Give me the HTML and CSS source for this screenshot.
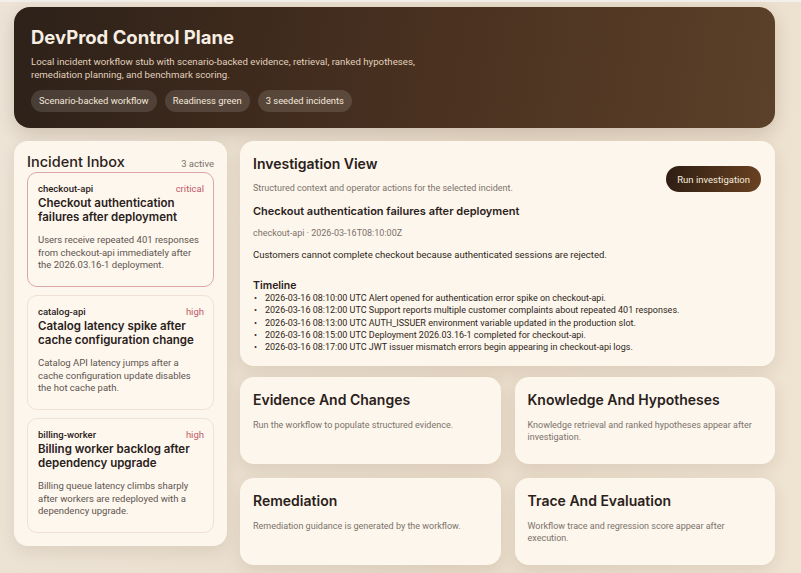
FILE: index.html
```html
<!DOCTYPE html>
<html lang="en">

<head>
    <meta charset="UTF-8">
    <meta name="viewport" content="width=device-width, initial-scale=1.0">
    <title>DevProd Control Plane</title>
    <link rel="stylesheet" href="styles.css">
</head>

<body>
    <div class="page">
        <header class="hero">
            <h1>DevProd Control Plane</h1>
            <p class="hero-sub">Local incident workflow stub with scenario-backed evidence, retrieval, ranked hypotheses,<br>remediation planning, and benchmark scoring.</p>
            <div class="pills">
                <span class="pill">Scenario-backed workflow</span>
                <span class="pill">Readiness green</span>
                <span class="pill">3 seeded incidents</span>
            </div>
        </header>

        <main class="layout">
            <aside class="inbox">
                <div class="inbox-head">
                    <h2>Incident Inbox</h2>
                    <span class="count">3 active</span>
                </div>
                <div class="incident selected">
                    <div class="incident-top">
                        <span class="service">checkout-api</span>
                        <span class="sev">critical</span>
                    </div>
                    <h3>Checkout authentication failures after deployment</h3>
                    <p>Users receive repeated 401 responses from checkout-api immediately after the 2026.03.16-1 deployment.</p>
                </div>
                <div class="incident">
                    <div class="incident-top">
                        <span class="service">catalog-api</span>
                        <span class="sev">high</span>
                    </div>
                    <h3>Catalog latency spike after cache configuration change</h3>
                    <p>Catalog API latency jumps after a cache configuration update disables the hot cache path.</p>
                </div>
                <div class="incident">
                    <div class="incident-top">
                        <span class="service">billing-worker</span>
                        <span class="sev">high</span>
                    </div>
                    <h3>Billing worker backlog after dependency upgrade</h3>
                    <p>Billing queue latency climbs sharply after workers are redeployed with a dependency upgrade.</p>
                </div>
            </aside>

            <section class="main-col">
                <div class="panel investigation">
                    <div class="inv-head">
                        <div>
                            <h2>Investigation View</h2>
                            <p class="muted">Structured context and operator actions for the selected incident.</p>
                        </div>
                        <button class="run-btn">Run investigation</button>
                    </div>
                    <h3 class="inv-title">Checkout authentication failures after deployment</h3>
                    <p class="muted meta">checkout-api · 2026-03-16T08:10:00Z</p>
                    <p class="summary">Customers cannot complete checkout because authenticated sessions are rejected.</p>
                    <h4 class="timeline-title">Timeline</h4>
                    <ul class="timeline">
                        <li>2026-03-16 08:10:00 UTC Alert opened for authentication error spike on checkout-api.</li>
                        <li>2026-03-16 08:12:00 UTC Support reports multiple customer complaints about repeated 401 responses.</li>
                        <li>2026-03-16 08:13:00 UTC AUTH_ISSUER environment variable updated in the production slot.</li>
                        <li>2026-03-16 08:15:00 UTC Deployment 2026.03.16-1 completed for checkout-api.</li>
                        <li>2026-03-16 08:17:00 UTC JWT issuer mismatch errors begin appearing in checkout-api logs.</li>
                    </ul>
                </div>

                <div class="grid">
                    <div class="panel small">
                        <h2>Evidence And Changes</h2>
                        <p class="muted">Run the workflow to populate structured evidence.</p>
                    </div>
                    <div class="panel small">
                        <h2>Knowledge And Hypotheses</h2>
                        <p class="muted">Knowledge retrieval and ranked hypotheses appear after investigation.</p>
                    </div>
                    <div class="panel small">
                        <h2>Remediation</h2>
                        <p class="muted">Remediation guidance is generated by the workflow.</p>
                    </div>
                    <div class="panel small">
                        <h2>Trace And Evaluation</h2>
                        <p class="muted">Workflow trace and regression score appear after execution.</p>
                    </div>
                </div>
            </section>
        </main>
    </div>
</body>

</html>
```

FILE: styles.css
```css
* {
    margin: 0;
    padding: 0;
    box-sizing: border-box;
}

body {
    font-family: Roboto, "Liberation Sans", sans-serif;
    color: #2a211b;
    background: linear-gradient(100deg, #ede4d7 0%, #e9dcca 60%, #efe3d2 100%);
    min-height: 573px;
    overflow: hidden;
}

.page {
    padding: 5px 26px 0 14px;
    border-top: 2px solid #f3f0ec;
}

h1,
h2,
h3,
h4 {
    font-family: Inter, "DejaVu Sans", sans-serif;
}

.hero {
    background: linear-gradient(100deg, #2d2119 0%, #4a3120 55%, #5b4129 100%);
    border-radius: 16px;
    padding: 19px 17px 16px;
    color: #f7eee2;
    box-shadow: 0 6px 18px rgba(70, 45, 20, 0.18);
}

.hero h1 {
    font-size: 18.5px;
    font-weight: 700;
    line-height: 22px;
}

.hero-sub {
    margin-top: 8px;
    font-size: 9.7px;
    line-height: 12.5px;
    color: #e0d0bc;
}

.pills {
    display: flex;
    gap: 8px;
    margin-top: 9px;
}

.pill {
    background: rgba(255, 255, 255, 0.13);
    border-radius: 11px;
    padding: 0 8px;
    height: 22px;
    line-height: 22px;
    font-size: 9.4px;
    color: #f3e8da;
}

.layout {
    display: flex;
    gap: 13px;
    margin-top: 13px;
    align-items: flex-start;
}

.inbox {
    width: 213px;
    flex-shrink: 0;
    background: #fdf6ec;
    border-radius: 14px;
    padding: 12px 13px 13px 13px;
    box-shadow: 0 6px 16px rgba(90, 60, 30, 0.1);
}

.inbox-head {
    display: flex;
    justify-content: space-between;
    align-items: baseline;
    margin-bottom: 1px;
}

.inbox-head h2 {
    font-size: 14.5px;
    font-weight: 500;
    line-height: 18px;
}

.count {
    font-size: 9.5px;
    color: #7b716a;
}

.incident {
    border: 1px solid #efe2d4;
    border-radius: 10px;
    padding: 10px 9px 12px 10px;
    background: #fdf7ee;
    height: 115px;
    margin-top: 8px;
}

.inbox-head + .incident {
    margin-top: 0;
}

.incident.selected {
    border: 1.5px solid #d9a8a6;
}

.incident-top {
    display: flex;
    justify-content: space-between;
    font-size: 9.5px;
    line-height: 12px;
}

.service {
    font-weight: 500;
    color: #2a211b;
}

.sev {
    color: #c25a68;
}

.incident h3 {
    font-size: 11.5px;
    font-weight: 600;
    line-height: 14px;
    margin-top: 1px;
}

.incident p {
    font-size: 9.5px;
    line-height: 12.5px;
    color: #5e554f;
    margin-top: 10px;
}

.main-col {
    flex: 1;
    display: flex;
    flex-direction: column;
    gap: 11px;
}

.panel {
    background: #fdf6ec;
    border-radius: 14px;
    box-shadow: 0 6px 16px rgba(90, 60, 30, 0.1);
}

.investigation {
    height: 225px;
    padding: 14px 13px 0;
}

.inv-head {
    display: flex;
    justify-content: space-between;
    align-items: flex-start;
}

.panel h2 {
    font-size: 14px;
    font-weight: 600;
    line-height: 18px;
}

.muted {
    font-size: 9px;
    color: #7b726b;
    line-height: 12px;
}

.inv-head .muted {
    margin-top: 9px;
}

.run-btn {
    margin-top: 11px;
    margin-right: 1px;
    background: linear-gradient(100deg, #2d1d12 0%, #6a4222 100%);
    color: #f7ecde;
    border: none;
    border-radius: 13px;
    height: 26px;
    padding: 0 11px;
    font-family: Roboto, "Liberation Sans", sans-serif;
    font-size: 9.5px;
}

.inv-title {
    font-size: 11px;
    font-weight: 600;
    margin-top: 10px;
    line-height: 14px;
}

.meta {
    margin-top: 9px;
}

.summary {
    font-size: 9.5px;
    line-height: 12px;
    margin-top: 10px;
    color: #2e2620;
}

.timeline-title {
    font-size: 10.5px;
    font-weight: 600;
    margin-top: 18px;
    line-height: 13px;
}

.timeline {
    list-style: none;
    font-size: 9px;
    line-height: 12.3px;
    color: #2e2620;
}

.timeline li::before {
    content: "•";
    display: inline-block;
    width: 11px;
    padding-left: 1px;
}

.grid {
    display: grid;
    grid-template-columns: 1fr 1fr;
    column-gap: 14px;
    row-gap: 14px;
}

.small {
    height: 87px;
    padding: 14px 13px;
}

.small .muted {
    margin-top: 10px;
}
```
